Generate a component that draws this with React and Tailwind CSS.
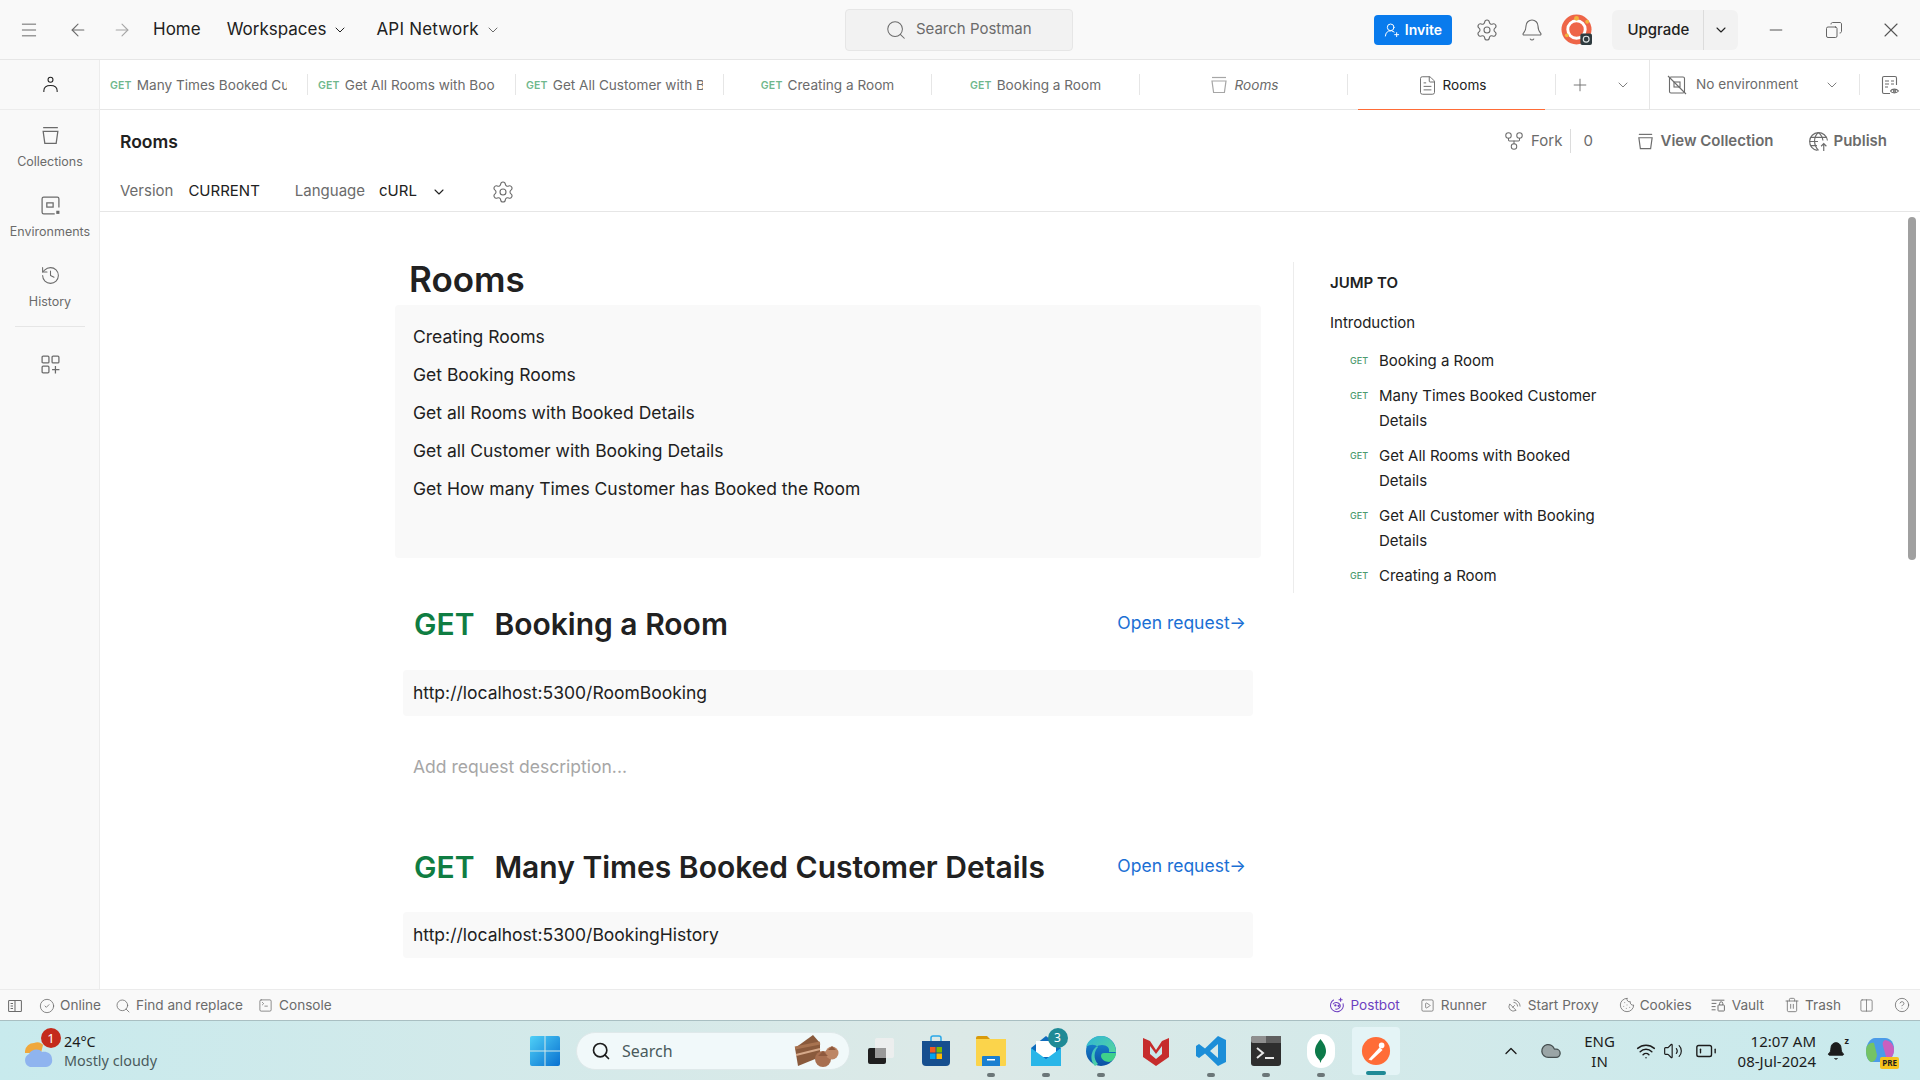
import React from 'react';
import {
    Menu, ArrowLeft, ArrowRight, ChevronDown, ChevronUp, Search, Settings, Bell, X, Minus, Copy, UserRoundPlus,
    Plus, FileText, GitFork, History, CircleCheck, SquareTerminal, SquarePlay, SatelliteDish, Cookie,
    Trash2, Columns2, CircleHelp, Wifi, Volume2, BatteryLow, Cloud,
} from 'lucide-react';

function CollectionIcon({ className }) {
    return (
        <svg viewBox="0 0 20 20" fill="none" stroke="currentColor" strokeWidth="1.2" className={className}>
            <path d="M3 2.5h14" />
            <path d="M3 6h14l-1.6 11.5H4.6z" />
        </svg>
    );
}

function EnvIcon({ className }) {
    return (
        <svg viewBox="0 0 20 20" fill="none" stroke="currentColor" strokeWidth="1.2" className={className}>
            <path d="M18 12V3.5A1.5 1.5 0 0 0 16.5 2h-13A1.5 1.5 0 0 0 2 3.5v13A1.5 1.5 0 0 0 3.5 18H14" />
            <rect x="6.5" y="7.5" width="6" height="4" />
            <rect x="15.5" y="15" width="3" height="3" fill="currentColor" stroke="none" />
        </svg>
    );
}

function AppsIcon({ className }) {
    return (
        <svg viewBox="0 0 20 20" fill="none" stroke="currentColor" strokeWidth="1.2" className={className}>
            <rect x="2" y="2" width="6.5" height="6.5" rx="1" />
            <rect x="11.5" y="2" width="6.5" height="6.5" rx="1" />
            <rect x="2" y="11.5" width="6.5" height="6.5" rx="1" />
            <path d="M14.7 11.5v7M11.5 14.9h7" />
        </svg>
    );
}

function PersonIcon({ className }) {
    return (
        <svg viewBox="0 0 20 20" fill="none" stroke="currentColor" strokeWidth="1.1" className={className}>
            <circle cx="10" cy="5" r="2.6" />
            <path d="M3 18v-1.5C3 13 6 11 10 11s7 2 7 5.5V18" />
        </svg>
    );
}

function NoEnvIcon({ className }) {
    return (
        <svg viewBox="0 0 20 20" fill="none" stroke="currentColor" strokeWidth="1.1" className={className}>
            <rect x="2.5" y="2" width="15" height="16" rx="1.5" />
            <rect x="7" y="7" width="6" height="5" />
            <path d="M1 1l18 18" />
        </svg>
    );
}

function EnvQuickIcon({ className }) {
    return (
        <svg viewBox="0 0 20 20" fill="none" stroke="currentColor" strokeWidth="1.1" className={className}>
            <path d="M10 18.5H4A1.5 1.5 0 0 1 2.5 17V3A1.5 1.5 0 0 1 4 1.5h11A1.5 1.5 0 0 1 16.5 3v7" />
            <path d="M5 6h4M11 6h3M5 9h4M11 9h3M5 12h3" />
            <path d="M10.5 16c1.5-2.5 6-2.5 8 0-2 2.5-6.5 2.5-8 0z" />
            <circle cx="14.5" cy="16" r="1" />
        </svg>
    );
}

function PublishIcon({ className }) {
    return (
        <svg viewBox="0 0 20 20" fill="none" stroke="currentColor" strokeWidth="1.1" className={className}>
            <path d="M9 18.5A8.5 8.5 0 1 1 18.5 9" />
            <path d="M1.5 10h8M2.5 6h15M2.5 14h6" />
            <path d="M10 1.5c-5 4-5 12 0 17M10 1.5c3 2.5 4 5 4.2 7.5" />
            <path d="M15 19v-7M12.5 14.5L15 12l2.5 2.5" />
        </svg>
    );
}

function PostbotIcon({ className }) {
    return (
        <svg viewBox="0 0 20 20" fill="none" stroke="currentColor" strokeWidth="1.3" className={className}>
            <path d="M6 3.5A8 8 0 1 0 17.5 8" />
            <path d="M5 9c2-3 7-3 9 1 1 3-3 6-6 5" />
            <circle cx="8" cy="10.5" r=".8" fill="currentColor" />
            <circle cx="12" cy="11" r=".8" fill="currentColor" />
            <path d="M14.5 1v5M12 3.5h5" />
        </svg>
    );
}

function VaultIcon({ className }) {
    return (
        <svg viewBox="0 0 20 20" fill="none" stroke="currentColor" strokeWidth="1.2" className={className}>
            <path d="M2 4h16M2 8h6M2 12h5M2 16h5" />
            <rect x="10" y="10" width="8" height="7.5" rx=".8" />
            <path d="M12 10V8a2 2 0 0 1 4 0v2" />
        </svg>
    );
}

function PanelIcon({ className }) {
    return (
        <svg viewBox="0 0 20 20" fill="none" stroke="currentColor" strokeWidth="1.3" className={className}>
            <rect x="2" y="3" width="16" height="14" rx="1" />
            <path d="M10 3v14M4.5 7h3M4.5 10h3M4.5 13h3" />
        </svg>
    );
}

function Avatar() {
    return (
        <svg viewBox="0 0 32 32" className="w-[31px] h-[31px]">
            <circle cx="16" cy="16" r="15.5" fill="#ee6548" />
            <circle cx="16" cy="16" r="9" fill="none" stroke="#fff" strokeWidth="3" />
            <circle cx="16" cy="16" r="6" fill="#ee6548" />
            <circle cx="16" cy="4.5" r="2.5" fill="#f3b33e" />
            <circle cx="6" cy="22" r="2" fill="#f3b33e" />
            <circle cx="27" cy="8" r="2" fill="#f3b33e" />
            <rect x="20" y="20" width="12" height="12" rx="2" fill="#2f3b3f" />
            <circle cx="26" cy="26" r="3" fill="none" stroke="#dfe5e6" strokeWidth="1.2" />
        </svg>
    );
}

function TabMethod() {
    return <span className="text-[10.5px] font-semibold text-[#6fb88c] mr-[5px] shrink-0 tracking-[0.2px]">GET</span>;
}

const requestTabs = [
    { name: 'Many Times Booked Customer Details', clip: true },
    { name: 'Get All Rooms with Booked Details', clip: true },
    { name: 'Get All Customer with Booking Details', clip: true },
    { name: 'Creating a Room' },
    { name: 'Booking a Room' },
];

const sideItems = [
    { label: 'Collections', Icon: CollectionIcon },
    { label: 'Environments', Icon: EnvIcon },
    { label: 'History', Icon: History },
];

const introLinks = [
    'Creating Rooms',
    'Get Booking Rooms',
    'Get all Rooms with Booked Details',
    'Get all Customer with Booking Details',
    'Get How many Times Customer has Booked the Room',
];

const jumpLinks = [
    'Booking a Room',
    'Many Times Booked Customer Details',
    'Get All Rooms with Booked Details',
    'Get All Customer with Booking Details',
    'Creating a Room',
];

function TitleBar() {
    return (
        <header className="h-[60px] shrink-0 flex items-center bg-[#f9f9f9] border-b border-[#e6e6e6] text-[#212121]">
            <Menu className="w-5 h-5 ml-[19px] text-[#6b6b6b]" strokeWidth={1.2} />
            <ArrowLeft className="w-5 h-5 ml-[29px] text-[#6b6b6b]" strokeWidth={1.3} />
            <ArrowRight className="w-5 h-5 ml-[24px] text-[#a6a6a6]" strokeWidth={1.3} />
            <span className="ml-[21px] text-[17px]">Home</span>
            <span className="ml-[26px] text-[17px]">Workspaces</span>
            <ChevronDown className="w-4 h-4 ml-[6px]" strokeWidth={1.5} />
            <span className="ml-[28px] text-[17px] tracking-[0.2px]">API Network</span>
            <ChevronDown className="w-4 h-4 ml-[6px] text-[#555]" strokeWidth={1.3} />
            <div className="ml-[344px] w-[228px] h-[42px] flex items-center pl-[39px] bg-[#f2f2f2] border border-[#e6e6e6] rounded-[4px] text-[#6b6b6b] text-[15px]">
                <Search className="w-[22px] h-[22px] mr-[9px]" strokeWidth={1.1} />
                Search Postman
            </div>
            <button className="ml-[301px] w-[78px] h-[30px] flex items-center justify-center gap-[5px] bg-[#097bed] rounded-[4px] text-white text-[14px] font-semibold">
                <UserRoundPlus className="w-4 h-4" strokeWidth={1.5} />
                Invite
            </button>
            <Settings className="w-6 h-6 ml-[23px] text-[#6b6b6b]" strokeWidth={1.1} />
            <Bell className="w-6 h-6 ml-[21px] text-[#6b6b6b]" strokeWidth={1.1} />
            <div className="ml-[17px]"><Avatar /></div>
            <div className="ml-[20px] w-[126px] h-[40px] flex items-center bg-[#f2f2f2] rounded-[6px] text-[15px] font-medium">
                <span className="w-[92px] pl-[2px] text-center border-r border-[#dcdcdc] leading-[40px]">Upgrade</span>
                <ChevronDown className="w-4 h-4 ml-[9px]" strokeWidth={1.6} />
            </div>
            <Minus className="w-5 h-5 ml-[28px] text-[#555]" strokeWidth={1.2} />
            <Copy className="w-[18px] h-[18px] ml-[39px] text-[#555] -scale-x-100" strokeWidth={1.2} />
            <X className="w-6 h-6 ml-[36px] text-[#555]" strokeWidth={1.1} />
        </header>
    );
}

function TabBar() {
    return (
        <div className="h-[50px] shrink-0 flex bg-white border-b border-[#e6e6e6]">
            {requestTabs.map(tab => (
                <div key={tab.name} className="w-[208px] h-full flex items-center">
                    <div className={`flex-1 min-w-0 flex items-center overflow-hidden pt-[2px] text-[13.6px] text-[#6b6b6b] whitespace-nowrap ${tab.clip ? 'pl-[10px] pr-[20px]' : 'justify-center'}`}>
                        <TabMethod />
                        <span className={tab.clip ? 'min-w-0 overflow-hidden' : ''}>{tab.name}</span>
                    </div>
                    <div className="w-px h-[21px] shrink-0 bg-[#e6e6e6]" />
                </div>
            ))}
            <div className="w-[208px] h-full flex items-center">
                <div className="flex-1 flex items-center justify-center gap-[6px] pt-[2px] text-[13.6px] italic text-[#6b6b6b]">
                    <CollectionIcon className="w-[20px] h-[20px] text-[#a6a6a6]" />
                    Rooms
                </div>
                <div className="w-px h-[21px] bg-[#e6e6e6]" />
            </div>
            <div className="w-[208px] h-full flex items-center">
                <div className="w-[10px]" />
                <div className="w-[187px] h-[50px] pt-[2px] flex items-center justify-center gap-[5px] text-[13.6px] text-[#212121] border-b border-[#ff6c37]">
                    <FileText className="w-[21px] h-[21px] text-[#6b6b6b]" strokeWidth={1.1} />
                    Rooms
                </div>
                <div className="ml-[10px] w-px h-[21px] bg-[#e6e6e6]" />
            </div>
            <div className="w-[93px] h-full flex items-center">
                <Plus className="w-[20px] h-[20px] ml-[14px] text-[#6b6b6b]" strokeWidth={1.1} />
                <ChevronDown className="w-4 h-4 ml-[25px] text-[#6b6b6b]" strokeWidth={1.3} />
            </div>
            <div className="flex-1 h-full flex items-center border-l border-[#e6e6e6] text-[13.6px] text-[#6b6b6b]">
                <NoEnvIcon className="w-[20px] h-[20px] ml-[17px]" />
                <span className="ml-[9px]">No environment</span>
                <ChevronDown className="w-4 h-4 ml-[26px]" strokeWidth={1.3} />
                <div className="ml-[19px] w-px h-[21px] bg-[#e6e6e6]" />
                <EnvQuickIcon className="w-[20px] h-[20px] ml-[20px]" />
            </div>
        </div>
    );
}

function Sidebar() {
    return (
        <aside className="w-[100px] shrink-0 flex flex-col items-center bg-[#f9f9f9] border-r border-[#ececec] text-[#6b6b6b]">
            <div className="w-full h-[50px] shrink-0 pl-[1px] flex items-center justify-center border-b border-[#ececec] text-[#212121]">
                <PersonIcon className="w-[19px] h-[19px]" />
            </div>
            <div className="pt-[15px] pl-[1px] flex flex-col gap-[20px]">
                {sideItems.map(({ label, Icon }) => (
                    <div key={label} className="h-[50px] flex flex-col items-center">
                        <Icon className="w-[21px] h-[21px]" strokeWidth={1.2} />
                        <span className="mt-[8px] text-[12.5px] leading-[16px]">{label}</span>
                    </div>
                ))}
            </div>
            <div className="mt-[11px] w-[70px] h-px bg-[#e6e6e6]" />
            <AppsIcon className="w-[21px] h-[21px] mt-[27px] ml-[1px]" />
        </aside>
    );
}

function SubHeader() {
    return (
        <div className="h-[102px] shrink-0 border-b border-[#e6e6e6] text-[#6b6b6b]">
            <div className="h-[56px] pt-[6px] pl-[20px] pr-[33px] flex items-center">
                <h2 className="pt-[2px] text-[17.5px] font-semibold text-[#212121]">Rooms</h2>
                <div className="ml-auto flex items-center text-[15px]">
                    <GitFork className="w-[22px] h-[22px]" strokeWidth={1.1} />
                    <span className="ml-[6px]">Fork</span>
                    <div className="ml-[8px] w-px h-[24px] bg-[#dcdcdc]" />
                    <span className="ml-[12px] w-[10px]">0</span>
                    <CollectionIcon className="w-[19px] h-[19px] ml-[43px]" />
                    <span className="ml-[5px] font-semibold">View Collection</span>
                    <PublishIcon className="w-[21px] h-[21px] ml-[34px]" />
                    <span className="ml-[5px] font-semibold">Publish</span>
                </div>
            </div>
            <div className="h-[45px] pt-[6px] pl-[20px] flex items-center text-[15px]">
                <span>Version</span>
                <span className="ml-[15px] text-[#212121]">CURRENT</span>
                <span className="ml-[35px]">Language</span>
                <span className="ml-[14px] text-[#212121]">cURL</span>
                <ChevronDown className="w-4 h-4 ml-[14px] text-[#212121]" strokeWidth={1.6} />
                <Settings className="w-6 h-6 ml-[44px]" strokeWidth={1.1} />
            </div>
        </div>
    );
}

function RequestBlock({ title, url, description, urlGap }) {
    return (
        <section className="px-[8px]">
            <div className="h-[40px] flex items-center pl-[11px] pr-[7px]">
                <span className="text-[30px] font-semibold text-[#0f7d42]">GET</span>
                <span className="ml-[20px] text-[30px] font-semibold text-[#212121]">{title}</span>
                <a className="ml-auto mb-[2px] text-[17.5px] text-[#1a6fd4]">Open request→</a>
            </div>
            <div className={`${urlGap} h-[46px] flex items-center pl-[10px] pt-[1px] bg-[#f9f9f9] rounded-[4px] text-[17.5px] text-[#212121]`}>{url}</div>
            {description && <p className="mt-[38px] pl-[10px] h-[26px] leading-[26px] text-[17.5px] text-[#a6a6a6]">{description}</p>}
        </section>
    );
}

function JumpTo() {
    return (
        <nav className="ml-[32px] mt-[50px] w-[320px] h-[331px] border-l border-[#ececec] pl-[36px] pt-[11px] text-[15px] text-[#212121]">
            <h4 className="font-semibold h-[20px] leading-[20px]">JUMP TO</h4>
            <p className="mt-[20px] h-[20px] leading-[20px]">Introduction</p>
            <ul className="mt-[15px] flex flex-col gap-[10px]">
                {jumpLinks.map(link => (
                    <li key={link} className="flex pl-[20px]">
                        <span className="w-[29px] shrink-0 text-[9px] font-medium leading-[25px] text-[#4c9a6f]">GET</span>
                        <span className="w-[225px] leading-[25px]">{link}</span>
                    </li>
                ))}
            </ul>
        </nav>
    );
}

function Documentation() {
    return (
        <div className="relative flex-1 overflow-hidden bg-white">
            <div className="flex pl-[295px]">
                <article className="w-[866px] shrink-0">
                    <h1 className="mt-[41px] h-[52px] leading-[52px] pl-[14px] text-[35px] font-semibold text-[#212121]">Rooms</h1>
                    <div className="h-[253px] bg-[#f9f9f9] rounded-[4px] pl-[18px] pt-[13px] text-[17.5px] text-[#212121]">
                        {introLinks.map(link => (
                            <p key={link} className="h-[38px] leading-[38px]">{link}</p>
                        ))}
                    </div>
                    <div className="mt-[46px]">
                        <RequestBlock title="Booking a Room" url="http://localhost:5300/RoomBooking" description="Add request description..." urlGap="mt-[26px]" />
                    </div>
                    <div className="mt-[67px]">
                        <RequestBlock title="Many Times Booked Customer Details" url="http://localhost:5300/BookingHistory" urlGap="mt-[25px]" />
                    </div>
                </article>
                <JumpTo />
            </div>
            <div className="absolute top-[5px] right-[4px] w-[8px] h-[343px] rounded-full bg-[#a0a0a0]" />
        </div>
    );
}

function StatusBar() {
    return (
        <footer className="h-[31px] shrink-0 flex items-center pt-[1px] bg-[#f9f9f9] border-t border-[#ebebeb] text-[13.6px] text-[#6b6b6b]">
            <PanelIcon className="w-[16px] h-[16px] ml-[7px]" />
            <CircleCheck className="w-[16px] h-[16px] ml-[16px]" strokeWidth={1.2} />
            <span className="ml-[5px]">Online</span>
            <Search className="w-[16px] h-[16px] ml-[14px]" strokeWidth={1.2} />
            <span className="ml-[5px]">Find and replace</span>
            <SquareTerminal className="w-[15px] h-[15px] ml-[15px]" strokeWidth={1.2} />
            <span className="ml-[6px]">Console</span>
            <div className="ml-auto flex items-center">
                <PostbotIcon className="w-[16px] h-[16px] text-[#6d3fc0]" />
                <span className="ml-[5px] text-[#6d3fc0]">Postbot</span>
                <SquarePlay className="w-[15px] h-[15px] ml-[20px]" strokeWidth={1.2} />
                <span className="ml-[6px]">Runner</span>
                <SatelliteDish className="w-[15px] h-[15px] ml-[20px]" strokeWidth={1.2} />
                <span className="ml-[6px]">Start Proxy</span>
                <Cookie className="w-[16px] h-[16px] ml-[20px]" strokeWidth={1.2} />
                <span className="ml-[5px]">Cookies</span>
                <VaultIcon className="w-[16px] h-[16px] ml-[18px]" />
                <span className="ml-[6px]">Vault</span>
                <Trash2 className="w-[16px] h-[16px] ml-[20px]" strokeWidth={1.2} />
                <span className="ml-[5px]">Trash</span>
                <Columns2 className="w-[15px] h-[15px] ml-[18px]" strokeWidth={1.2} />
                <CircleHelp className="w-[16px] h-[16px] ml-[20px] mr-[10px]" strokeWidth={1.2} />
            </div>
        </footer>
    );
}

function WinLogo() {
    return (
        <svg viewBox="0 0 30 30" className="w-[30px] h-[30px]">
            <defs>
                <linearGradient id="win" x1="0" y1="0" x2="1" y2="1">
                    <stop offset="0" stopColor="#4fd0f7" />
                    <stop offset="1" stopColor="#0870d0" />
                </linearGradient>
            </defs>
            <path fill="url(#win)" d="M0 2a2 2 0 0 1 2-2h12.5v14.5H0zM15.5 0H28a2 2 0 0 1 2 2v12.5H15.5zM0 15.5h14.5V30H2a2 2 0 0 1-2-2zM15.5 15.5H30V28a2 2 0 0 1-2 2H15.5z" />
        </svg>
    );
}

function CakeArt() {
    return (
        <svg viewBox="0 0 46 34" className="w-[46px] h-[34px]">
            <path d="M2 14L20 1l7 8v14L5 32z" fill="#8a5a3c" />
            <path d="M2 14L27 9" stroke="#a87350" strokeWidth="3" />
            <path d="M3 21l24-6" stroke="#d6a98a" strokeWidth="2" />
            <circle cx="30" cy="25" r="8" fill="#a86f50" />
            <circle cx="39" cy="19" r="6.5" fill="#bd8665" />
            <path d="M25 22l5-5 5 5zM35 16l4-4 4 4z" fill="#8f5a3e" />
        </svg>
    );
}

const taskIcons = [
    {
        key: 'tasks',
        dot: false,
        art: (
            <svg viewBox="0 0 28 28" className="w-7 h-7">
                <rect x="1" y="11" width="18" height="16" rx="2" fill="#1f1f1f" />
                <rect x="8" y="1" width="19" height="20" rx="2" fill="#eeeeee" opacity=".85" />
                <rect x="8" y="11" width="11" height="10" fill="#9a9a9a" />
            </svg>
        ),
    },
    {
        key: 'store',
        dot: false,
        art: (
            <svg viewBox="0 0 28 32" className="w-7 h-8">
                <path d="M9 6V3a2 2 0 0 1 2-2h6a2 2 0 0 1 2 2v3" fill="none" stroke="#2aa7e8" strokeWidth="1.5" />
                <path d="M0 6h28v21a4 4 0 0 1-4 4H4a4 4 0 0 1-4-4z" fill="#164f8f" />
                <rect x="8" y="12" width="5.5" height="5.5" fill="#f05a22" />
                <rect x="14.5" y="12" width="5.5" height="5.5" fill="#7db900" />
                <rect x="8" y="18.5" width="5.5" height="5.5" fill="#00a2ed" />
                <rect x="14.5" y="18.5" width="5.5" height="5.5" fill="#fdb900" />
            </svg>
        ),
    },
    {
        key: 'files',
        dot: true,
        art: (
            <svg viewBox="0 0 32 32" className="w-8 h-8">
                <path d="M1 3a2 2 0 0 1 2-2h9l3 3h-14z" fill="#d99a0a" />
                <path d="M1 4h30v26a1 1 0 0 1-1 1H2a1 1 0 0 1-1-1z" fill="#fbd44b" />
                <path d="M8 21h16a1 1 0 0 1 1 1v9H7v-9a1 1 0 0 1 1-1z" fill="#1a7fd0" />
                <rect x="12" y="24" width="8" height="1.5" fill="#ffffff" />
            </svg>
        ),
    },
    {
        key: 'mail',
        dot: true,
        art: (
            <div className="relative w-[32px] h-[32px]">
                <svg viewBox="0 0 32 32" className="w-[32px] h-[32px]">
                    <path d="M1 13L16 1l15 12v18H1z" fill="#0f6cbd" />
                    <rect x="6" y="6" width="20" height="16" fill="#fff" />
                    <path d="M1 13l15 11 15-11v18H1z" fill="#29b6e8" />
                </svg>
                <span className="absolute -top-[7px] -right-[6px] w-[20px] h-[20px] rounded-full bg-[#1f8a96] text-white text-[12px] leading-[20px] text-center">3</span>
            </div>
        ),
    },
    {
        key: 'edge',
        dot: true,
        art: (
            <svg viewBox="0 0 32 32" className="w-8 h-8">
                <defs>
                    <linearGradient id="edge" x1="0" y1="0" x2="0" y2="1">
                        <stop offset="0" stopColor="#1a8fd6" />
                        <stop offset="1" stopColor="#0a4fa4" />
                    </linearGradient>
                    <linearGradient id="edge2" x1="0" y1="0" x2="1" y2="1">
                        <stop offset="0" stopColor="#2fb3d8" />
                        <stop offset="1" stopColor="#5fe08c" />
                    </linearGradient>
                </defs>
                <circle cx="16" cy="16" r="15" fill="url(#edge)" />
                <path d="M10 31C3 24 7 10 17 10c5 0 8 3 7 7h7C31 8 24 1 16 1 9 1 3 5 1 12c4-3 9-3 12 0-4 4-5 12 0 17z" fill="url(#edge2)" />
                <path d="M31 18c-4 0-9 0-12 0-2 0-3 1-3 3 0 3 4 6 8 6 4-1 7-5 7-9z" fill="#3fd08a" />
            </svg>
        ),
    },
    {
        key: 'mcafee',
        dot: false,
        art: (
            <svg viewBox="0 0 28 32" className="w-7 h-8">
                <path d="M1 3l7 3 6 9 6-9 7-3v19L14 31 1 22z" fill="#c62c2c" />
                <path d="M8 11v8l6 5 6-5v-8l-6 8z" fill="#c9e9ec" />
            </svg>
        ),
    },
    {
        key: 'vscode',
        dot: true,
        art: (
            <svg viewBox="0 0 32 32" className="w-8 h-8">
                <path d="M23 1l8 4v22l-8 4-13-12.5L4 23l-3-2v-10l3-2 6 4.5zM23 9l-8 7 8 7z" fill="#1c8ed8" />
            </svg>
        ),
    },
    {
        key: 'terminal',
        dot: true,
        art: (
            <svg viewBox="0 0 30 30" className="w-[30px] h-[30px]">
                <rect width="30" height="30" rx="3" fill="#2e2e2e" />
                <rect width="30" height="7" rx="2" fill="#8f8f8f" />
                <rect x="15" width="15" height="7" fill="#5f5f5f" />
                <path d="M6 12l6 5-6 5" fill="none" stroke="#e8e8e8" strokeWidth="2" />
                <path d="M14 22h9" stroke="#e8e8e8" strokeWidth="2" />
            </svg>
        ),
    },
    {
        key: 'mongo',
        dot: true,
        art: (
            <div className="w-[28px] h-[34px] rounded-full bg-white flex items-center justify-center">
                <svg viewBox="0 0 12 26" className="w-[11px] h-[24px]">
                    <path d="M6 0c3 4 6 8 6 13s-3 8-5 10l-1 3-1-3c-2-2-5-5-5-10S3 4 6 0z" fill="#0d7a4a" />
                </svg>
            </div>
        ),
    },
];

function Taskbar() {
    return (
        <div className="relative h-[60px] shrink-0 flex items-center bg-linear-to-r from-[#c8eaed] via-[#dce9e7] to-[#c8eaed] border-t border-[#a9bfc2] font-['Noto_Sans',sans-serif] text-[#1c1c1c]">
            <div className="relative ml-[22px] w-[36px] h-[36px]">
                <svg viewBox="0 0 36 36" className="w-[36px] h-[36px]">
                    <path d="M3 18a9 9 0 0 1 9-8c4-2 8 0 9 2l-2 8H3z" fill="#f0a83c" />
                    <path d="M8 34a7 7 0 0 1-1-13c2-5 10-6 13-2 4-1 10 1 10 7 1 4-2 8-6 8z" fill="#8fb4ef" />
                </svg>
                <span className="absolute -top-[5px] right-[-3px] w-[20px] h-[20px] rounded-full bg-[#c42b1c] text-white text-[13px] leading-[20px] text-center">1</span>
            </div>
            <div className="ml-[6px] text-[14.4px] leading-[19px] w-[110px]">
                <p>24°C</p>
                <p className="text-[#4a5a5c]">Mostly cloudy</p>
            </div>
            <div className="ml-[356px]"><WinLogo /></div>
            <div className="ml-[16px] w-[274px] h-[38px] flex items-center rounded-full bg-[#f1f9fa] border border-[#dfe9ea] pl-[14px] pr-[10px] text-[16px] text-[#4a5a5c]">
                <Search className="w-[20px] h-[20px] text-[#1c1c1c]" strokeWidth={2} />
                <span className="ml-[11px]">Search</span>
                <div className="ml-auto"><CakeArt /></div>
            </div>
            <div className="ml-[3px] flex">
                {taskIcons.map(icon => (
                    <div key={icon.key} className="relative w-[55px] h-[48px] flex items-center justify-center">
                        {icon.art}
                        {icon.dot && <span className="absolute bottom-[-2px] w-[8px] h-[4px] rounded-full bg-[#6b7678]" />}
                    </div>
                ))}
                <div className="relative w-[55px] h-[48px] flex items-center justify-center">
                    <div className="w-[48px] h-[48px] rounded-[4px] bg-[#e4f4f6] flex items-center justify-center">
                        <svg viewBox="0 0 32 32" className="w-[30px] h-[30px]">
                            <circle cx="16" cy="16" r="15" fill="#ff6c37" />
                            <path d="M8 25L20 12l3 3L11 26z" fill="#fff" />
                            <circle cx="22" cy="10" r="3" fill="#fff" />
                        </svg>
                    </div>
                    <span className="absolute bottom-[0px] w-[20px] h-[4px] rounded-full bg-[#1f8a96]" />
                </div>
            </div>
            <div className="ml-auto flex items-center pr-[25px]">
                <ChevronUp className="w-5 h-5" strokeWidth={1.6} />
                <Cloud className="w-[22px] h-[22px] ml-[19px] text-[#454f50]" fill="#9aa5a6" strokeWidth={1.4} />
                <div className="ml-[21px] w-[34px] text-center text-[15px] leading-[20px]">
                    <p>ENG</p>
                    <p>IN</p>
                </div>
                <Wifi className="w-[20px] h-[20px] ml-[19px]" strokeWidth={1.8} />
                <Volume2 className="w-[20px] h-[20px] ml-[7px]" strokeWidth={1.4} />
                <BatteryLow className="w-[22px] h-[22px] ml-[12px]" strokeWidth={1.5} />
                <div className="ml-[21px] text-right text-[15px] leading-[20px]">
                    <p>12:07 AM</p>
                    <p>08-Jul-2024</p>
                </div>
                <div className="relative ml-[10px]">
                    <Bell className="w-[20px] h-[20px]" fill="#1c1c1c" strokeWidth={1.2} />
                    <span className="absolute -top-[5px] -right-[3px] text-[9px] leading-[10px] font-bold">z</span>
                </div>
                <div className="relative ml-[19px] w-[30px] h-[30px]">
                    <svg viewBox="0 0 30 30" className="w-[30px] h-[30px]">
                        <path d="M10 2h10c6 0 9 5 9 11 0 7-4 13-10 13H8C3 26 1 21 1 15 1 9 5 2 10 2z" fill="#4b9be8" />
                        <path d="M1 15c0-5 3-9 8-8l3 12c-1 5-3 7-6 7-3-1-5-6-5-11z" fill="#74c365" />
                        <path d="M20 4c6 1 9 5 9 10s-3 9-7 10l-4-14c-1-3 0-5 2-6z" fill="#c95fbf" />
                    </svg>
                    <span className="absolute bottom-[-3px] right-[-4px] h-[12px] px-[2px] rounded-[2px] bg-[#f6c21c] text-[8px] leading-[12px] font-bold">PRE</span>
                </div>
            </div>
        </div>
    );
}

export default function App() {
    return (
        <div className="w-[1920px] h-[1080px] flex flex-col overflow-hidden bg-white font-['Inter',sans-serif]">
            <TitleBar />
            <div className="flex-1 min-h-0 flex">
                <Sidebar />
                <div className="flex-1 min-w-0 flex flex-col">
                    <TabBar />
                    <SubHeader />
                    <Documentation />
                </div>
            </div>
            <StatusBar />
            <Taskbar />
        </div>
    );
}
